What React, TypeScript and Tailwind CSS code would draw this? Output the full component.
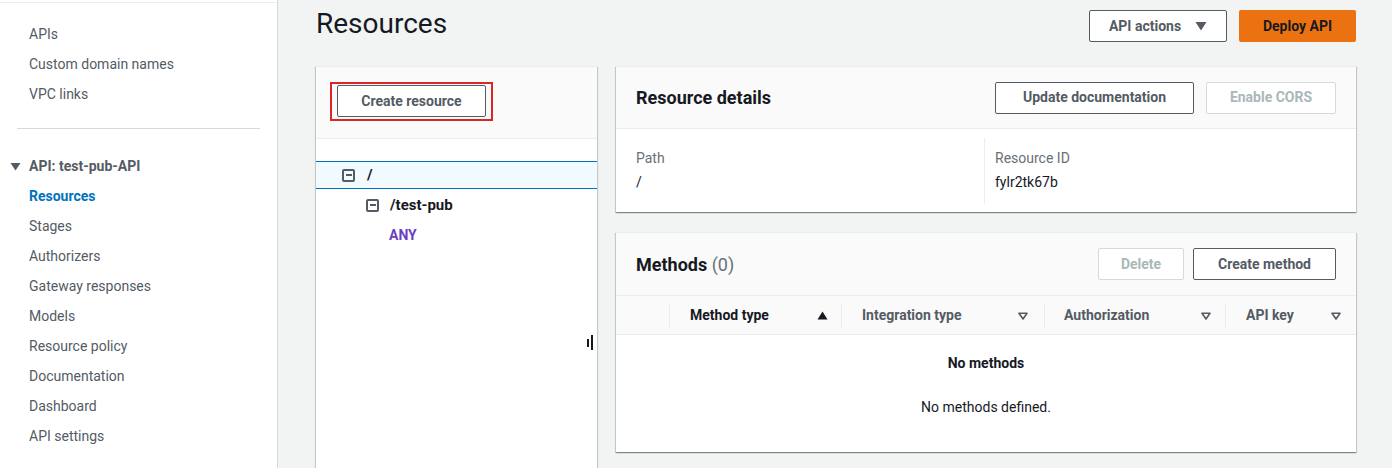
import React from 'react'

const font = "font-['Roboto','Liberation_Sans',sans-serif]"

function MinusBox() {
  return (
    <span className="w-[13px] h-[13px] border-2 border-[#545b64] rounded-[2px] flex items-center justify-center shrink-0">
      <span className="w-[6px] h-[2px] bg-[#545b64]" />
    </span>
  )
}

function SortDown() {
  return (
    <svg width="10" height="8" viewBox="0 0 10 8" className="shrink-0">
      <path d="M1 1.2h8L5 7z" fill="none" stroke="#545b64" strokeWidth="1.6" strokeLinejoin="round" />
    </svg>
  )
}

function SortUp() {
  return (
    <svg width="11" height="9" viewBox="0 0 11 9" className="shrink-0">
      <path d="M5.5 0.5L10.5 8.5H0.5z" fill="#16191f" />
    </svg>
  )
}

const navTop = ['APIs', 'Custom domain names', 'VPC links']
const navApi = ['Stages', 'Authorizers', 'Gateway responses', 'Models', 'Resource policy', 'Documentation', 'Dashboard', 'API settings']

const panel = 'bg-white shadow-[0_1px_1px_0_rgba(0,28,36,0.3),1px_1px_1px_0_rgba(0,28,36,0.15),-1px_1px_1px_0_rgba(0,28,36,0.15)] border-t border-[#eaeded]'
const btn = 'h-[32px] border border-[#545b64] rounded-[2px] bg-white text-[14px] font-bold text-[#545b64] flex items-center justify-center whitespace-nowrap'
const btnOff = 'h-[32px] border border-[#d5dbdb] rounded-[2px] bg-white text-[14px] font-bold text-[#aab7b8] flex items-center justify-center whitespace-nowrap'

export default function App() {
  return (
    <div className={`${font} flex h-[468px] w-[1392px] overflow-hidden bg-[#f2f3f3] text-[#16191f]`}>
      <aside className="w-[278px] shrink-0 bg-white border-r border-[#d5dbdb] pt-[2px]">
        <div className="border-t border-[#eaeded] pt-[16px]">
          {navTop.map((t) => (
            <div key={t} className="h-[30px] pl-[29px] flex items-center text-[14px] text-[#545b64]">{t}</div>
          ))}
          <div className="mx-[17px] mt-[19px] border-t border-[#d5dbdb]" />
          <div className="mt-[22px] h-[30px] pl-[10px] flex items-center gap-[8px] text-[14px] font-bold text-[#545b64]">
            <svg width="11" height="9" viewBox="0 0 11 9"><path d="M0.5 1h10L5.5 8.5z" fill="#545b64" /></svg>
            API: test-pub-API
          </div>
          <div className="h-[30px] pl-[29px] flex items-center text-[14px] font-bold text-[#0073bb]">Resources</div>
          {navApi.map((t) => (
            <div key={t} className="h-[30px] pl-[29px] flex items-center text-[14px] text-[#545b64]">{t}</div>
          ))}
        </div>
      </aside>

      <main className="flex-1 pl-[38px] pr-[36px] pt-[10px]">
        <div className="flex items-center justify-between h-[32px]">
          <h1 className="text-[28px] leading-none font-normal text-[#16191f] -mt-[4px]">Resources</h1>
          <div className="flex gap-[12px]">
            <button className={`${btn} w-[138px] gap-[14px]`}>
              API actions
              <svg width="12" height="10" viewBox="0 0 12 10"><path d="M0.5 1h11L6 9.5z" fill="#545b64" /></svg>
            </button>
            <button className="h-[32px] w-[117px] rounded-[2px] bg-[#ec7211] text-[14px] font-bold text-[#16191f] flex items-center justify-center">Deploy API</button>
          </div>
        </div>

        <div className="mt-[24px] flex gap-[19px] items-start">
          <section className={`${panel} relative w-[281px] h-[420px] shrink-0`}>
            <div className="h-[72px] bg-[#fafafa] border-b border-[#eaeded] pl-[14px] pt-[15px]">
              <div className="inline-flex border-[2px] border-[#dc2626] px-[5px] pt-[1px] pb-[2px]">
                <button className={`${btn} w-[149px]`}>Create resource</button>
              </div>
            </div>
            <div className="pt-[22px]">
              <div className="h-[28px] bg-[#f1faff] border-y border-[#0073bb] flex items-center gap-[12px] pl-[26px]">
                <MinusBox />
                <span className="text-[15px] font-bold">/</span>
              </div>
              <div className="h-[31px] flex items-center gap-[11px] pl-[50px] pt-[1px]">
                <MinusBox />
                <span className="text-[15px] font-bold">/test-pub</span>
              </div>
              <div className="h-[30px] flex items-center pl-[73px] text-[14px] font-bold text-[#6b3fc0]">ANY</div>
            </div>
            <div className="absolute left-[271px] top-[268px] flex items-center gap-[2px]">
              <span className="w-[2px] h-[8px] bg-[#16191f]" />
              <span className="w-[2px] h-[15px] bg-[#16191f]" />
            </div>
          </section>

          <div className="flex-1 flex flex-col gap-[20px]">
            <section className={panel}>
              <div className="h-[62px] bg-[#fafafa] border-b border-[#eaeded] flex items-center justify-between px-[20px]">
                <h2 className="text-[18px] font-bold">Resource details</h2>
                <div className="flex gap-[12px]">
                  <button className={`${btn} w-[199px]`}>Update documentation</button>
                  <button className={`${btnOff} w-[130px]`}>Enable CORS</button>
                </div>
              </div>
              <div className="h-[83px] px-[20px] flex items-center">
                <div className="w-[348px] h-[66px] flex flex-col justify-center gap-[3px]">
                  <div className="text-[14px] text-[#687078]">Path</div>
                  <div className="text-[14px]">/</div>
                </div>
                <div className="h-[66px] border-l border-[#eaeded] pl-[10px] flex flex-col justify-center gap-[3px]">
                  <div className="text-[14px] text-[#687078]">Resource ID</div>
                  <div className="text-[14px]">fylr2tk67b</div>
                </div>
              </div>
            </section>

            <section className={`${panel} h-[220px]`}>
              <div className="h-[63px] bg-[#fafafa] border-b border-[#eaeded] flex items-center justify-between px-[20px]">
                <h2 className="text-[18px] font-bold">
                  Methods <span className="font-normal text-[#687078]">(0)</span>
                </h2>
                <div className="flex gap-[9px]">
                  <button className={`${btnOff} w-[86px]`}>Delete</button>
                  <button className={`${btn} w-[143px]`}>Create method</button>
                </div>
              </div>
              <div className="h-[39px] bg-[#fafafa] border-b border-[#eaeded] flex items-center text-[14px] font-bold text-[#545b64] pt-[1px]">
                <div className="w-[54px] h-[24px] border-r border-[#eaeded]" />
                <div className="w-[172px] h-[24px] border-r border-[#eaeded] flex items-center justify-between pl-[20px] pr-[13px] text-[#16191f]">
                  Method type <SortUp />
                </div>
                <div className="w-[203px] h-[24px] border-r border-[#eaeded] flex items-center justify-between pl-[20px] pr-[16px]">
                  Integration type <SortDown />
                </div>
                <div className="w-[181px] h-[24px] border-r border-[#eaeded] flex items-center justify-between pl-[19px] pr-[14px]">
                  Authorization <SortDown />
                </div>
                <div className="flex-1 h-[24px] flex items-center justify-between pl-[20px] pr-[15px]">
                  API key <SortDown />
                </div>
              </div>
              <div className="flex flex-col items-center text-[14px]">
                <div className="mt-[18px] font-bold">No methods</div>
                <div className="mt-[23px]">No methods defined.</div>
              </div>
            </section>
          </div>
        </div>
      </main>
    </div>
  )
}
